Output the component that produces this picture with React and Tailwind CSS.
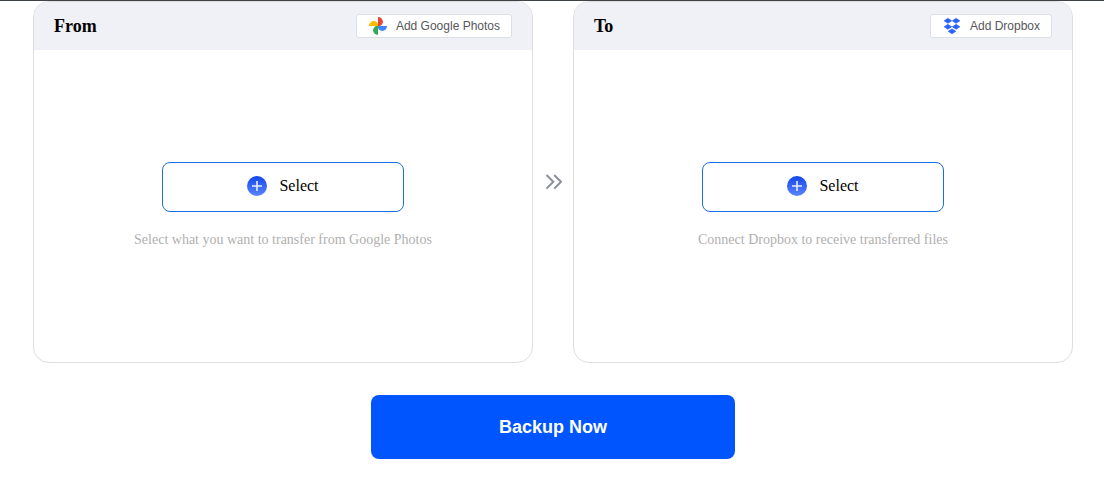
import React from "react";

const GooglePhotosIcon = () => (
  <svg className="w-5 h-5 shrink-0" viewBox="0 0 20 20" aria-hidden="true">
    <path d="M10 1a4.9 4.7 0 0 1 0 9.4z" fill="#ea4335" />
    <path d="M19 10a4.7 4.9 0 0 1-9.4 0z" fill="#4285f4" />
    <path d="M10 19a4.9 4.7 0 0 1 0-9.4z" fill="#34a853" />
    <path d="M1 10a4.7 4.9 0 0 1 9.4 0z" fill="#fbbc04" />
    <path d="M10 5v5h2V5z" fill="#ea4335" />
  </svg>
);

const DropboxIcon = () => (
  <svg
    className="w-5 h-5 shrink-0"
    viewBox="0 0 20 20"
    fill="#2a62fb"
    stroke="#2a62fb"
    strokeWidth="0.8"
    strokeLinejoin="round"
    aria-hidden="true"
  >
    <path d="M5.9 2.4l3.7 2.4-3.7 2.4-3.7-2.4z" />
    <path d="M14.1 2.4l3.7 2.4-3.7 2.4-3.7-2.4z" />
    <path d="M5.9 8.4l3.7 2.4-3.7 2.4-3.7-2.4z" />
    <path d="M14.1 8.4l3.7 2.4-3.7 2.4-3.7-2.4z" />
    <path d="M10 12.9l3.7 2.4-3.7 2.4-3.7-2.4z" />
  </svg>
);

const PlusIcon = ({ id }) => (
  <svg className="w-5 h-5 shrink-0" viewBox="0 0 20 20" aria-hidden="true">
    <defs>
      <linearGradient id={id} x1="0" y1="0" x2="0" y2="1">
        <stop offset="0" stopColor="#1347ea" />
        <stop offset="1" stopColor="#5b84ff" />
      </linearGradient>
    </defs>
    <circle cx="10" cy="10" r="10" fill={`url(#${id})`} />
    <path d="M10 5v10M5 10h10" stroke="#e8eeff" strokeWidth="1.6" />
  </svg>
);

const panels = [
  {
    id: "from",
    title: "From",
    addLabel: "Add Google Photos",
    Icon: GooglePhotosIcon,
    hint: "Select what you want to transfer from Google Photos",
  },
  {
    id: "to",
    title: "To",
    addLabel: "Add Dropbox",
    Icon: DropboxIcon,
    hint: "Connect Dropbox to receive transferred files",
  },
];

const TransferPanel = ({ panel }) => {
  const { id, title, addLabel, Icon, hint } = panel;

  return (
    <section className="flex-1 min-w-0 border border-[#dedede] rounded-2xl overflow-hidden bg-white">
      <header className="flex items-center justify-between h-12 px-5 bg-[#f0f1f6]">
        <h2 className="text-lg font-bold">{title}</h2>
        <button className="flex items-center gap-2 h-6 px-[11px] bg-white border border-[#dcdfe6] rounded-[3px] font-['Liberation_Sans',Arial,sans-serif] text-xs text-[#55575c] whitespace-nowrap">
          <Icon />
          {addLabel}
        </button>
      </header>

      <div className="flex flex-col items-center justify-center gap-[18px] min-h-[312px] px-4">
        <button className="flex items-center justify-center gap-3 w-full max-w-[242px] h-[50px] pb-0.5 border border-[#1a6fe8] rounded-lg text-base">
          <PlusIcon id={`plus-${id}`} />
          Select
        </button>
        <p className="text-sm leading-5 text-center text-[#b0b0b0]">{hint}</p>
      </div>
    </section>
  );
};

const App = () => {
  return (
    <main className="border-t border-[#3c4245] bg-white pl-[33px] pr-[31px] pb-5 font-['Liberation_Serif','Times_New_Roman',serif] text-black">
      <div className="flex items-center">
        <TransferPanel panel={panels[0]} />
        <div className="flex justify-center w-10 shrink-0">
          <svg className="w-5 h-5" viewBox="0 0 20 20" fill="none" stroke="#8c8f9c" strokeWidth="2" aria-hidden="true">
            <path d="M3.5 3l6.8 6.8-6.8 6.8M11.2 3l6.8 6.8-6.8 6.8" />
          </svg>
        </div>
        <TransferPanel panel={panels[1]} />
      </div>

      <div className="flex justify-center mt-8">
        <button className="w-full max-w-[364px] h-16 rounded-lg bg-[#0055ff] font-['Liberation_Sans',Arial,sans-serif] text-lg font-bold text-white">
          Backup Now
        </button>
      </div>
    </main>
  );
};

export default App;
